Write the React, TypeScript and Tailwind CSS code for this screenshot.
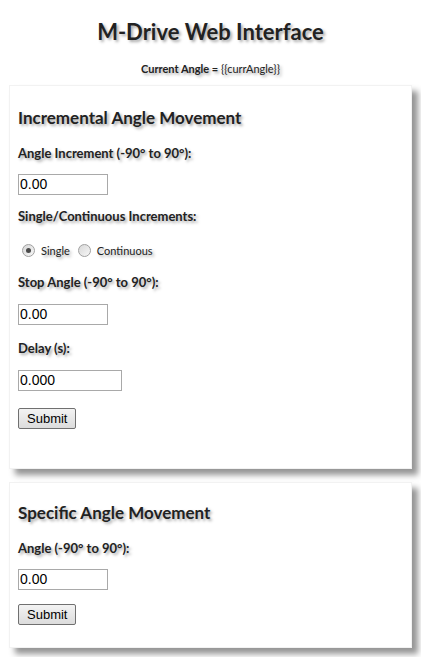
import React, { useState } from "react";

const shadow = "[text-shadow:2px_2px_3px_rgba(0,0,0,0.35)]";

const Label = ({ children }: { children: React.ReactNode }) => (
  <p className={`text-[13px] font-bold leading-[16px] text-[#222] ${shadow}`}>{children}</p>
);

const TextBox = ({ value, width }: { value: string; width: string }) => (
  <input
    type="text"
    defaultValue={value}
    className={`${width} block h-[21px] border border-[#a9a9a9] bg-white px-[1px] font-['Liberation_Sans',Arial,sans-serif] text-[14px] text-black outline-none`}
  />
);

const SubmitButton = () => (
  <button className="block h-[21px] rounded-[2px] border border-[#707070] bg-gradient-to-b from-[#f3f3f3] to-[#dcdcdc] px-[8px] font-['Liberation_Sans',Arial,sans-serif] text-[13px] leading-[17px] text-black">
    Submit
  </button>
);

const Radio = ({ checked, label, onClick }: { checked: boolean; label: string; onClick: () => void }) => (
  <label className="flex cursor-pointer items-center gap-[6px]" onClick={onClick}>
    <span className="flex h-[13px] w-[13px] items-center justify-center rounded-full border border-[#a0a0a0] bg-gradient-to-br from-[#d8d8d8] to-[#f7f7f7]">
      {checked && <span className="h-[5px] w-[5px] rounded-full bg-[#4a4a4a]" />}
    </span>
    <span className={`text-[11px] leading-[13px] text-[#222] ${shadow}`}>{label}</span>
  </label>
);

const App = () => {
  const [mode, setMode] = useState("single");

  return (
    <div className="min-h-[657px] bg-white pt-[19px] font-['Lato','Open_Sans',sans-serif] text-[#222]">
      <h1 className={`text-center text-[22px] font-bold leading-[26px] text-[#222] ${shadow}`}>
        M-Drive Web Interface
      </h1>
      <p className={`mt-[17px] text-center text-[11px] leading-[14px] ${shadow}`}>
        <span className="font-bold">Current Angle = </span>
        <span>{"{{currAngle}}"}</span>
      </p>

      <div className="mx-[9px] mt-[9px] border border-[#f2f2f2] bg-white px-[8px] pb-[39px] pt-[22px] shadow-[6px_6px_6px_rgba(0,0,0,0.42)]">
        <h2 className={`text-[17px] font-bold leading-[20px] text-[#222] ${shadow}`}>Incremental Angle Movement</h2>
        <div className="mt-[17px]">
          <Label>Angle Increment (-90° to 90°):</Label>
        </div>
        <div className="mt-[13px]">
          <TextBox value="0.00" width="w-[90px]" />
        </div>
        <div className="mt-[13px]">
          <Label>Single/Continuous Increments:</Label>
        </div>
        <div className="mt-[20px] flex items-center gap-[8px] pl-[4px]">
          <Radio checked={mode === "single"} label="Single" onClick={() => setMode("single")} />
          <Radio checked={mode === "continuous"} label="Continuous" onClick={() => setMode("continuous")} />
        </div>
        <div className="mt-[17px]">
          <Label>Stop Angle (-90° to 90°):</Label>
        </div>
        <div className="mt-[14px]">
          <TextBox value="0.00" width="w-[90px]" />
        </div>
        <div className="mt-[15px]">
          <Label>Delay (s):</Label>
        </div>
        <div className="mt-[14px]">
          <TextBox value="0.000" width="w-[104px]" />
        </div>
        <div className="mt-[17px]">
          <SubmitButton />
        </div>
      </div>

      <div className="mx-[9px] mt-[13px] border border-[#f2f2f2] bg-white px-[8px] pb-[22px] pt-[20px] shadow-[6px_6px_6px_rgba(0,0,0,0.42)]">
        <h2 className={`text-[17px] font-bold leading-[20px] text-[#222] ${shadow}`}>Specific Angle Movement</h2>
        <div className="mt-[17px]">
          <Label>Angle (-90° to 90°):</Label>
        </div>
        <div className="mt-[13px]">
          <TextBox value="0.00" width="w-[90px]" />
        </div>
        <div className="mt-[14px]">
          <SubmitButton />
        </div>
      </div>
    </div>
  );
};

App.displayName = "App";

export default App;
